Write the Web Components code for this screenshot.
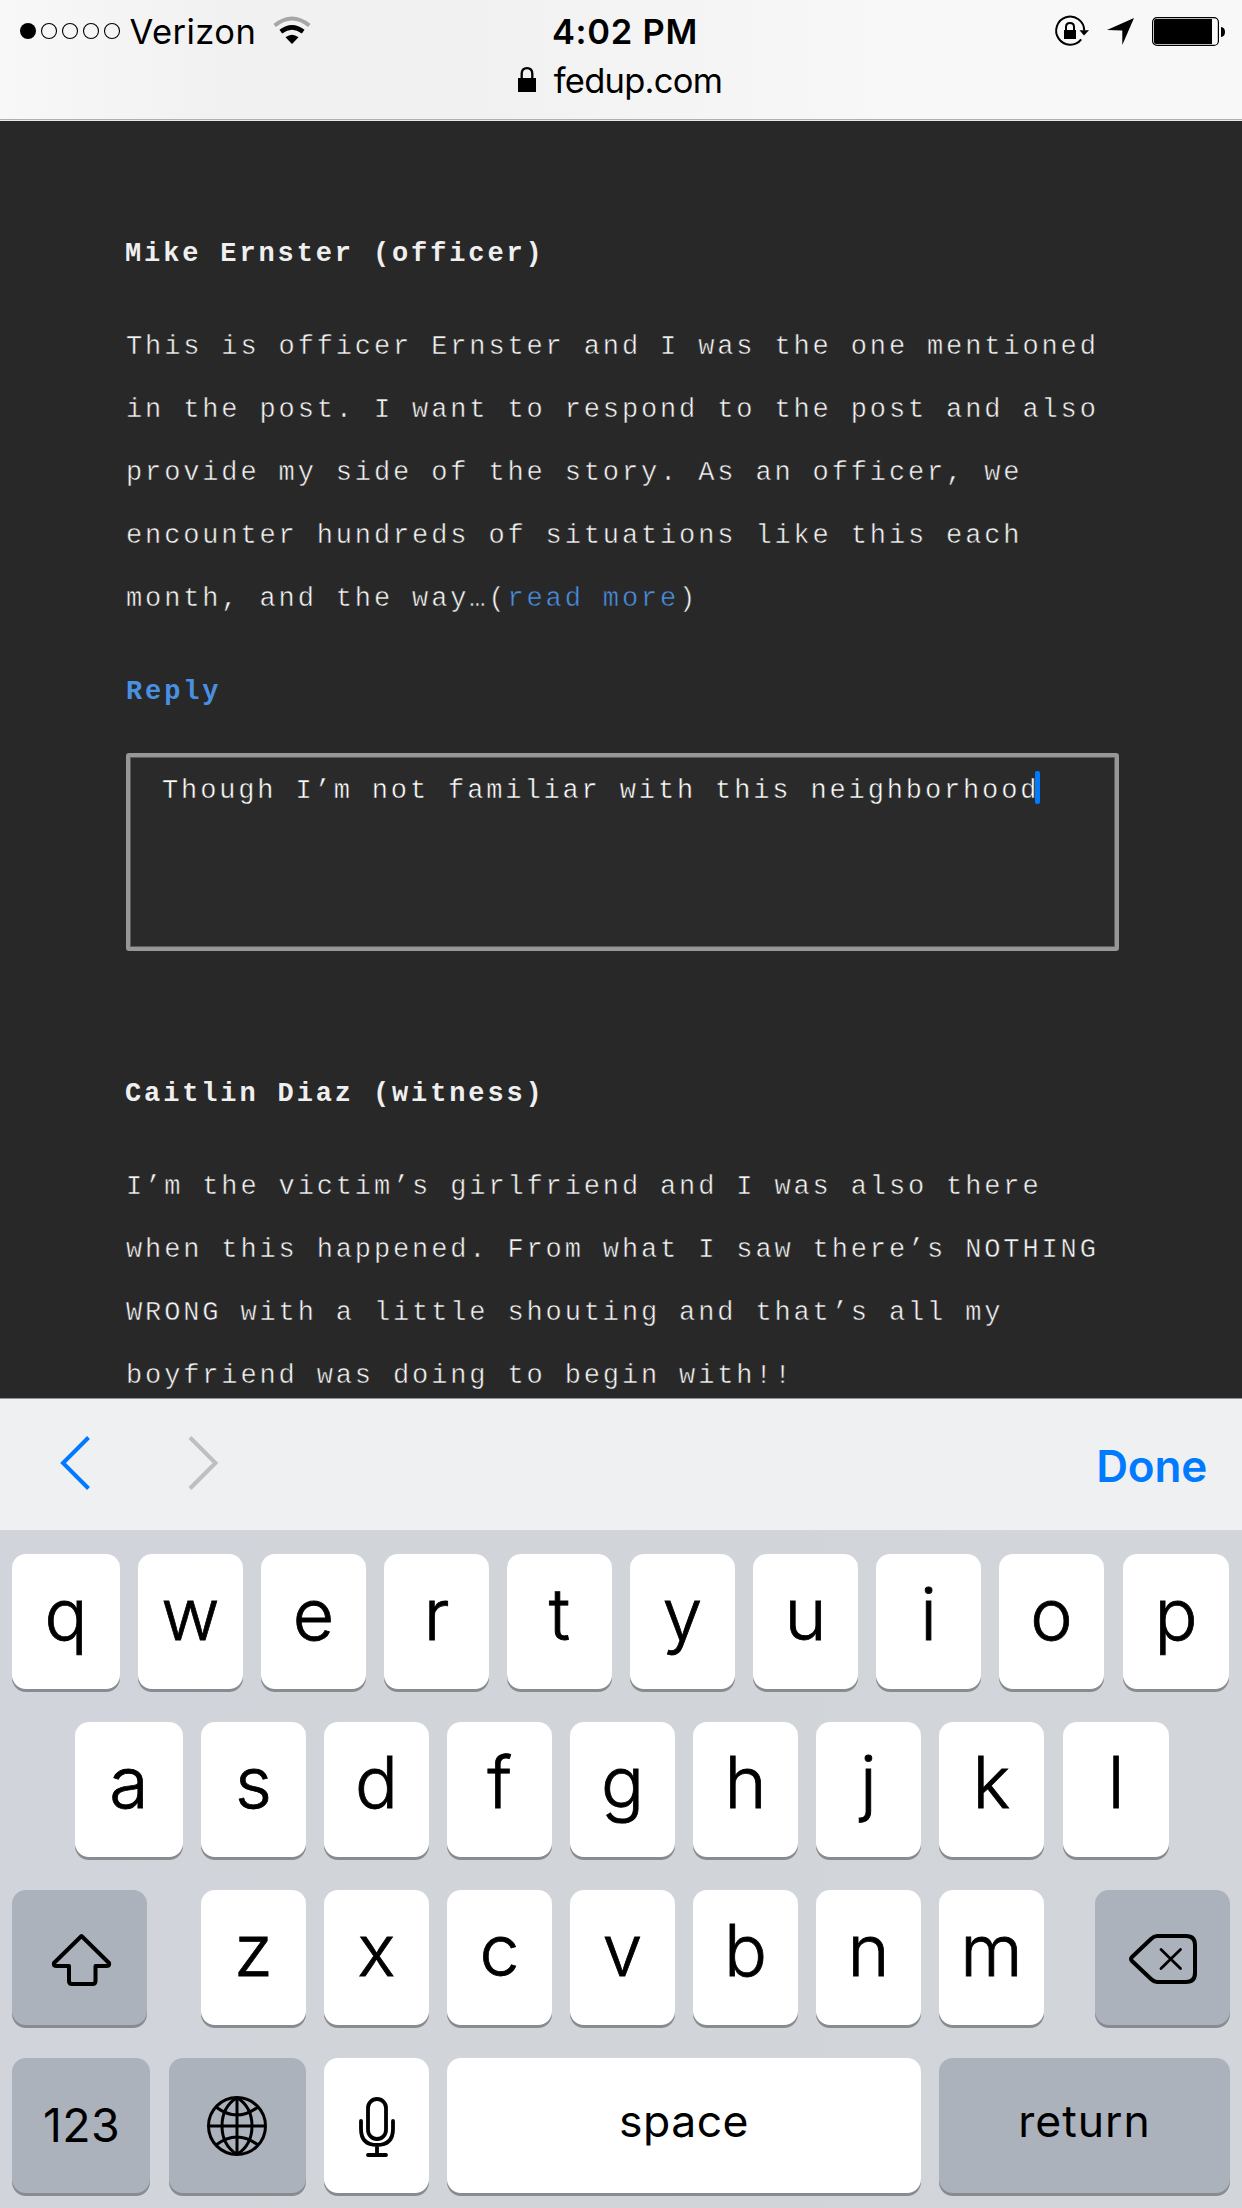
<!DOCTYPE html>
<html lang="en">
<head>
<meta charset="utf-8">
<title>fedup.com</title>
<style>
html,body{margin:0;padding:0;background:#282828}
body{width:1242px;height:2208px;overflow:hidden;font-family:Inter,"Liberation Sans",sans-serif;color:#000}
</style>
</head>
<body>
<phone-screen>
  <status-header slot="header" carrier="Verizon" time="4:02 PM" site="fedup.com"></status-header>
  <comment-post author="Mike Ernster (officer)">
    <div>This is officer Ernster and I was the one mentioned</div>
    <div>in the post. I want to respond to the post and also</div>
    <div>provide my side of the story. As an officer, we</div>
    <div>encounter hundreds of situations like this each</div>
    <div>month, and the way…(<text-link>read more</text-link>)</div>
    <reply-box slot="reply">Though I’m not familiar with this neighborhood</reply-box>
  </comment-post>
  <comment-post author="Caitlin Diaz (witness)">
    <div>I’m the victim’s girlfriend and I was also there</div>
    <div>when this happened. From what I saw there’s NOTHING</div>
    <div>WRONG with a little shouting and that’s all my</div>
    <div>boyfriend was doing to begin with!!</div>
  </comment-post>
  <key-toolbar slot="footer"></key-toolbar>
  <key-board slot="footer"></key-board>
</phone-screen>
<script>
function define(name, html, setup) {
  customElements.define(name, class extends HTMLElement {
    constructor() {
      super();
      const t = document.createElement('template');
      t.innerHTML = html;
      this.attachShadow({mode: 'open'}).append(t.content.cloneNode(true));
    }
    connectedCallback() { if (setup) setup(this, this.shadowRoot); }
  });
}

define('phone-screen', `
<style>
:host{display:flex;flex-direction:column;width:1242px;height:2208px;overflow:hidden;background:#282828}
main{flex:1;min-height:0;overflow:hidden;padding:102px 123px 0 126px;display:flex;flex-direction:column;gap:112px}
</style>
<slot name="header"></slot><main><slot></slot></main><slot name="footer"></slot>`);

define('status-header', `
<style>
:host{display:block;height:121px;flex:none;box-sizing:border-box;background:linear-gradient(90deg,#f8f8f8 0,#f1f1f1 18%,#f1f1f1 38%,#f8f8f8 72%,#f8f8f8 100%);border-bottom:1px solid #e8e8e8;box-shadow:inset 0 -1px #b0b0b0}
.row{display:grid;grid-template-columns:1fr auto 1fr;height:62px;align-items:center}
.left,.right{display:flex;align-items:center}
.left{padding-left:20px}
.right{justify-content:flex-end;padding-right:17px}
.net{font-size:34.5px;letter-spacing:.45px;margin-left:9.5px}
.time{font-size:34.5px;font-weight:600;letter-spacing:.75px;padding-left:8px}
.site{display:flex;justify-content:center;align-items:center;height:37px;font-size:34.5px;letter-spacing:-.75px;padding-right:2px}
svg{display:block;overflow:visible;flex:none}
</style>
<div class="row">
 <div class="left">
  <svg width="100" height="16" viewBox="0 0 100 16"><circle cx="8" cy="8" r="8"/><g fill="none" stroke="#000" stroke-width="1.1"><circle cx="29" cy="8" r="7.5"/><circle cx="50" cy="8" r="7.5"/><circle cx="71" cy="8" r="7.5"/><circle cx="92" cy="8" r="7.5"/></g></svg>
  <span class="net"></span>
  <svg style="margin:0 0 2px 16.500px" width="38" height="28" viewBox="0 0 38 28"><g fill="none"><path d="M1.700 9.500Q19-4.500 36.300 9.500" stroke="#a6a6a6" stroke-width="4"/><path d="M7.800 15.600Q19 7.200 30.200 15.600" stroke="#000" stroke-width="4.500"/></g><path d="M12.500 21.300Q19 16 25.500 21.300L19 28Z"/></svg>
 </div>
 <span class="time"></span>
 <div class="right">
  <svg width="34" height="30" viewBox="0 0 34 30"><path d="M26.200 23.300A14 14 0 1 1 29.200 14.500" fill="none" stroke="#000" stroke-width="2"/><path d="M24.500 14.300H34L29 19.500Z"/><path d="M9 14H21V23H9Z"/><path d="M11 15V11Q11 7 15 7T19 11V15" fill="none" stroke="#000" stroke-width="2"/></svg>
  <svg style="margin-left:18px" width="27" height="27" viewBox="0 0 27 27"><path d="M27 0L15.300 27V12.500L0 12Z"/></svg>
  <svg style="margin-left:18px" width="73" height="29" viewBox="0 0 73 29"><rect x=".6" y=".6" width="65.800" height="27.800" rx="4.500" fill="none" stroke="#000" stroke-width="1.200"/><path d="M4 2H60V27H4Q2 27 2 25V4Q2 2 4 2Z"/><path d="M69 10Q73 10.500 73 15T69 20Z"/></svg>
 </div>
</div>
<div class="site">
 <svg style="margin:0 18px 2px 0" width="18" height="25" viewBox="0 0 18 25"><path d="M0 11H18V25H0Z"/><path d="M3.700 12V7Q3.700 1.200 9 1.200T14.300 7V12" fill="none" stroke="#000" stroke-width="2.300"/></svg>
 <span class="url"></span>
</div>`, (el, r) => {
  r.querySelector('.net').textContent = el.getAttribute('carrier');
  r.querySelector('.time').textContent = el.getAttribute('time');
  r.querySelector('.url').textContent = el.getAttribute('site');
});

define('comment-post', `
<style>
:host{display:flex;flex-direction:column;gap:30px;font:27px/63px "Liberation Mono",monospace;letter-spacing:2.870px;white-space:nowrap;color:#f4f4f4}
h2{font:inherit;font-weight:700;margin:0 0 0 -1px;color:#efefef}
.body{-webkit-text-stroke:.5px #282828}
</style>
<h2></h2><div class="body"><slot></slot></div><slot name="reply"></slot>`, (el, r) => {
  r.querySelector('h2').textContent = el.getAttribute('author');
});

define('text-link', `<style>:host{color:#4a90e2}</style><slot></slot>`);

define('reply-box', `
<style>
:host{display:flex;flex-direction:column;gap:29px}
.label{font-weight:700;color:#4a90e2}
.box{display:flex;align-items:flex-start;box-sizing:border-box;height:198px;border:4px solid #979797;border-radius:3px;box-shadow:inset 0 0 0 1px #5c5c5c;background:#2a2a2a;padding:3px 0 0 32px}
.text{color:#fff;-webkit-text-stroke:.5px #2a2a2a}
.caret{width:4.500px;height:33px;margin:11px 0 0 -4px;border-radius:2px;background:#007aff;position:relative}
</style>
<div class="label">Reply</div>
<div class="box"><span class="text"><slot></slot></span><i class="caret"></i></div>`);

define('key-toolbar', `
<style>
:host{display:flex;align-items:center;flex:none;box-sizing:border-box;height:132px;border-top:1px solid #8e9094;background:#eff0f2;padding:0 35px 0 60px}
svg{display:block;margin-top:-3px}
.done{margin-left:auto;color:#007aff;font-size:44px;font-weight:600;letter-spacing:-.2px;margin-top:2px}
</style>
<svg width="160" height="54" viewBox="0 0 160 54" fill="none" stroke-width="4"><path d="M28.500 1.500L3 27L28.500 52.500" stroke="#007aff"/><path d="M130 1.500L155.500 27L130 52.500" stroke="#bfbfbf"/></svg>
<span class="done">Done</span>`);

define('key-cap', `
<style>
:host{display:flex;align-items:center;justify-content:center;flex:none;box-sizing:border-box;width:105px;height:135px;border-radius:14px;background:#fff;box-shadow:0 3px #888b8f;font-size:71.500px;font-weight:300;line-height:1;-webkit-text-stroke:.8px #000}
:host([dark]){background:#abb2bc}
:host([word]){font-size:44.500px;font-weight:400;-webkit-text-stroke:0}
::slotted(svg){display:block;overflow:visible}
span{display:block;padding-bottom:14px}
:host([word]) span{padding-bottom:8px}
:host([icon]) span{padding:0}
:host([num]) span{padding:0}
</style><span><slot></slot></span>`, el => {
  if (el.hasAttribute('w')) el.style.width = el.getAttribute('w') + 'px';
});

const letters = s => [...s].map(c => `<key-cap>${c}</key-cap>`).join('');
define('key-board', `
<style>
:host{display:flex;flex-direction:column;gap:33px;flex:none;box-sizing:border-box;height:678px;padding:24px 12px 15px;background:linear-gradient(90deg,#d1d5db,#d1d4d9 40%,#d2d5da)}
.row{display:flex;gap:18px}
.second{padding-left:63px}
.third{gap:0}
.third div{display:flex;gap:18px;margin:0 51px 0 54px}
.last{margin-left:1px}
</style>
<div class="row"><key-cap w="108">q</key-cap>${letters('wertyuio')}<key-cap class="last" w="106">p</key-cap></div>
<div class="row second"><key-cap w="108">a</key-cap>${letters('sdfghjk')}<key-cap class="last" w="106">l</key-cap></div>
<div class="row third">
 <key-cap dark icon w="135"><svg width="59" height="52" viewBox="0 0 59 52" fill="none" stroke="#000" stroke-width="4" stroke-linejoin="round" style="margin:4px 0 0 4px"><path d="M29.500 2L57 29Q58 32 55 32H43.500V47Q43.500 50 40.500 50H20Q17 50 17 47V32H4Q1 32 2 29Z"/></svg></key-cap>
 <div>${letters('zxcvbnm')}</div>
 <key-cap dark icon w="135"><svg width="68" height="50" viewBox="0 0 68 50" fill="none" stroke="#000" stroke-width="4" stroke-linejoin="round" stroke-linecap="round" style="margin-top:3px"><path d="M28 2H57Q66 2 66 11V39Q66 48 57 48H28Q25 48 22 45L3 27Q1 25 3 23L22 5Q25 2 28 2Z"/><path stroke-width="2.800" d="M32 15.500L51.500 34.500M51.500 15.500L32 34.500"/></svg></key-cap>
</div>
<div class="row">
 <key-cap dark word num w="138" style="font-size:46.500px;letter-spacing:.3px;padding-left:1px">123</key-cap>
 <key-cap dark icon w="137" style="margin-left:1px"><svg width="60" height="60" viewBox="0 0 60 60" fill="none" stroke="#000" stroke-width="3" style="margin:1px 2px 0 0"><circle cx="30" cy="30" r="28.500"/><path d="M30 1.500V58.500M1.500 30H58.500M30 1.500Q15 11 15 30T30 58.500M30 1.500Q45 11 45 30T30 58.500M9 11Q30 27 51 11M9 49Q30 33 51 49"/></svg></key-cap>
 <key-cap icon><svg width="36" height="60" viewBox="0 0 36 60" fill="none" stroke="#000" stroke-width="3.800" stroke-linecap="round" style="margin:2px 0 0 1px"><rect x="9" y="2" width="18" height="40" rx="9"/><path d="M2 24V32Q2 48 18 48T34 32V24M18 48V58M9 58H27"/></svg></key-cap>
 <key-cap word w="474" style="letter-spacing:.5px">space</key-cap>
 <key-cap dark word w="291" style="letter-spacing:1px">return</key-cap>
</div>`);
</script>
</body>
</html>
